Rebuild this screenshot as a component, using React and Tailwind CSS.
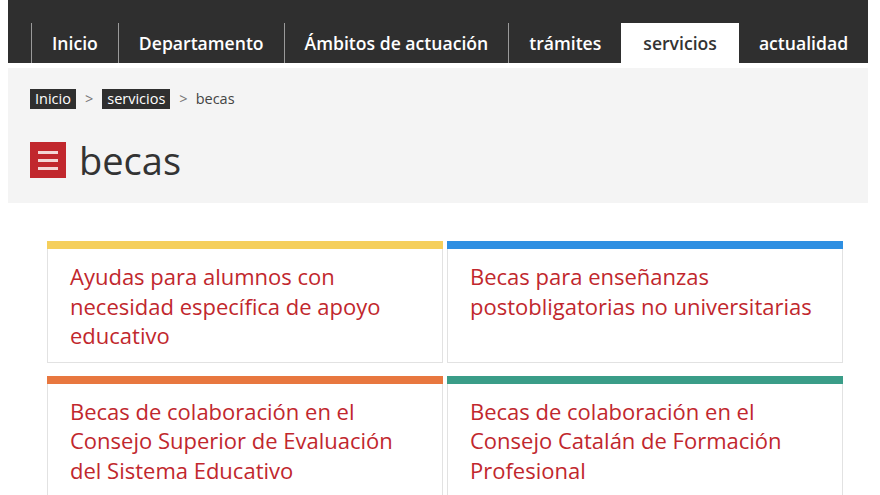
import React from "react";

const tabs = [
  { label: "Inicio" },
  { label: "Departamento" },
  { label: "Ámbitos de actuación" },
  { label: "trámites" },
  { label: "servicios", active: true },
  { label: "actualidad" },
];

const cards = [
  {
    title: "Ayudas para alumnos con necesidad específica de apoyo educativo",
    bar: "bg-[#f5cf5c]",
  },
  {
    title: "Becas para enseñanzas postobligatorias no universitarias",
    bar: "bg-[#2e8fe2]",
  },
  {
    title: "Becas de colaboración en el Consejo Superior de Evaluación del Sistema Educativo",
    bar: "bg-[#e8773f]",
  },
  {
    title: "Becas de colaboración en el Consejo Catalán de Formación Profesional",
    bar: "bg-[#3a9d88]",
  },
];

function MenuIcon() {
  return (
    <div className="w-[36px] h-[36px] bg-[#c1272d] flex flex-col items-center justify-center gap-[5px]">
      <span className="block w-[20px] h-[3px] bg-[#f3d6d6]" />
      <span className="block w-[20px] h-[3px] bg-[#f3d6d6]" />
      <span className="block w-[20px] h-[3px] bg-[#f3d6d6]" />
    </div>
  );
}

export default function App() {
  return (
    <div
      className="w-[880px] h-[495px] overflow-hidden bg-white"
      style={{ fontFamily: '"Open Sans", "Noto Sans", sans-serif' }}
    >
      {/* top bar with tabs */}
      <div className="ml-2 w-[860px] h-[63px] bg-[#2f2f2f] flex items-end pl-[23px]">
        {tabs.map((t, i) =>
          t.active ? (
            <div
              key={t.label}
              className="relative z-10 h-[45px] -mb-[5px] pb-[5px] px-[22px] flex items-center bg-white text-[#333] text-[17.6px] font-semibold"
            >
              {t.label}
            </div>
          ) : (
            <div
              key={t.label}
              className={`h-[40px] px-[20px] flex items-center text-white text-[17.6px] font-semibold whitespace-nowrap ${
                i < 4 ? "border-l border-[#9a9a9a]" : ""
              }`}
            >
              {t.label}
            </div>
          )
        )}
      </div>

      {/* page header */}
      <div className="ml-2 w-[860px] mt-[5px] h-[135px] bg-[#f4f4f4] px-[22px] pt-[21px]">
        <div className="flex items-center gap-[9px] text-[14.5px] leading-[20px]">
          <span className="bg-[#2f2f2f] text-white px-[5px]">Inicio</span>
          <span className="text-[#777]">&gt;</span>
          <span className="bg-[#2f2f2f] text-white px-[5px]">servicios</span>
          <span className="text-[#777]">&gt;</span>
          <span className="text-[#444] -ml-[1px]">becas</span>
        </div>
        <div className="mt-[33px] flex items-center gap-[13px]">
          <MenuIcon />
          <h1 className="text-[38px] leading-[36px] text-[#333] font-normal">becas</h1>
        </div>
      </div>

      {/* cards */}
      <div className="mt-[38px] ml-[47px] w-[796px] grid grid-cols-2 gap-x-[4px] gap-y-[13px]">
        {cards.map((c) => (
          <div key={c.title} className="flex flex-col">
            <div className={`h-[8px] ${c.bar}`} />
            <div className="flex-1 border border-t-0 border-[#e2e2e2] pl-[22px] pr-[20px] pt-[13px] pb-[11px]">
              <p className="text-[22px] leading-[29.5px] text-[#c1272d]">{c.title}</p>
            </div>
          </div>
        ))}
      </div>
    </div>
  );
}
